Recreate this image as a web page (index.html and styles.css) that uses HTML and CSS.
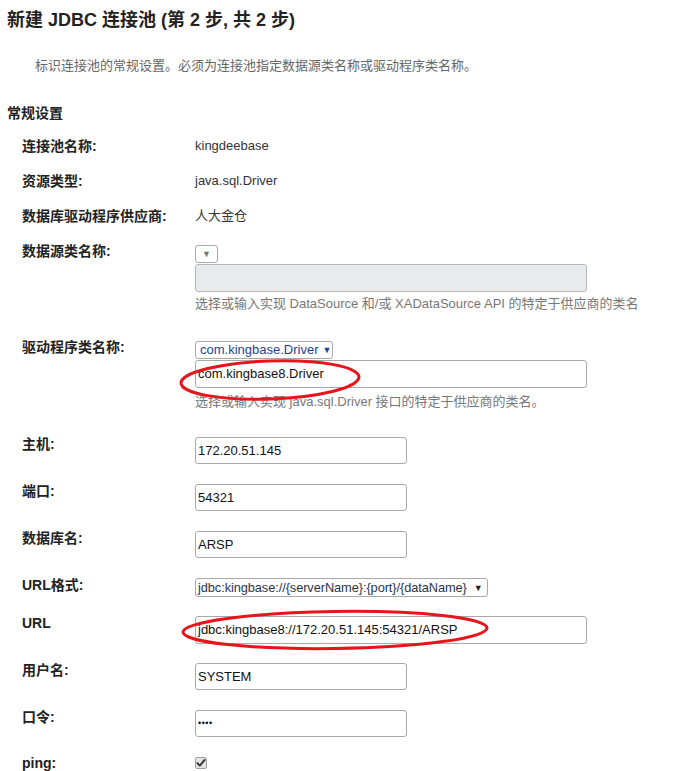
FILE: index.html
```html
<!DOCTYPE html>
<html lang="zh-CN">
<head>
<meta charset="utf-8">
<title>新建 JDBC 连接池</title>
<link rel="stylesheet" href="styles.css">
</head>
<body>
<div class="page">
  <h1 class="title">新建 JDBC 连接池 (第 2 步, 共 2 步)</h1>
  <p class="desc">标识连接池的常规设置。必须为连接池指定数据源类名称或驱动程序类名称。</p>
  <h2 class="section">常规设置</h2>

  <div class="form">
    <div class="row text-row">
      <div class="label">连接池名称:</div>
      <div class="value">kingdeebase</div>
    </div>
    <div class="row text-row">
      <div class="label">资源类型:</div>
      <div class="value">java.sql.Driver</div>
    </div>
    <div class="row text-row r3">
      <div class="label">数据库驱动程序供应商:</div>
      <div class="value">人大金仓</div>
    </div>
    <div class="row r4">
      <div class="label">数据源类名称:</div>
      <div class="field">
        <div class="select sel-empty"><span class="arrow grey">▼</span></div>
        <div class="input wide disabled"></div>
        <div class="help">选择或输入实现 DataSource 和/或 XADataSource API 的特定于供应商的类名</div>
      </div>
    </div>
    <div class="row r5">
      <div class="label">驱动程序类名称:</div>
      <div class="field">
        <div class="select sel-driver"><span class="sel-text blue">com.kingbase.Driver</span><span class="arrow blue">▼</span></div>
        <div class="input wide">com.kingbase8.Driver</div>
        <div class="help help2">选择或输入实现 java.sql.Driver 接口的特定于供应商的类名。</div>
      </div>
    </div>
    <div class="row r6">
      <div class="label">主机:</div>
      <div class="field"><div class="input">172.20.51.145</div></div>
    </div>
    <div class="row">
      <div class="label">端口:</div>
      <div class="field"><div class="input">54321</div></div>
    </div>
    <div class="row">
      <div class="label">数据库名:</div>
      <div class="field"><div class="input">ARSP</div></div>
    </div>
    <div class="row r9">
      <div class="label">URL格式:</div>
      <div class="field">
        <div class="select sel-url"><span class="sel-text slate">jdbc:kingbase://{serverName}:{port}/{dataName}</span><span class="arrow dark">▼</span></div>
      </div>
    </div>
    <div class="row r10">
      <div class="label">URL</div>
      <div class="field"><div class="input wide">jdbc:kingbase8://172.20.51.145:54321/ARSP</div></div>
    </div>
    <div class="row r11">
      <div class="label">用户名:</div>
      <div class="field"><div class="input">SYSTEM</div></div>
    </div>
    <div class="row r12">
      <div class="label">口令:</div>
      <div class="field"><div class="input pwd">••••</div></div>
    </div>
    <div class="row">
      <div class="label">ping:</div>
      <div class="field">
        <span class="checkbox"><svg width="10" height="10" viewBox="0 0 10 10"><path d="M1.5 5.2 L3.8 7.6 L8.6 2" fill="none" stroke="#3a3a3a" stroke-width="2" stroke-linecap="round" stroke-linejoin="round"/></svg></span>
      </div>
    </div>
  </div>
</div>

<svg class="marks" width="699" height="771" viewBox="0 0 699 771">
  <ellipse cx="270" cy="380" rx="89" ry="19" transform="rotate(-2 270 380)" fill="none" stroke="#e8141b" stroke-width="3"/>
  <ellipse cx="335" cy="630" rx="152" ry="18.5" transform="rotate(-0.8 335 630)" fill="none" stroke="#e8141b" stroke-width="3"/>
</svg>
</body>
</html>
```
FILE: styles.css
```css
html, body {
  margin: 0;
  padding: 0;
  background: #fff;
}
body {
  font-family: "Liberation Sans", Arial, "Noto Sans CJK SC", sans-serif;
  color: #222;
  position: relative;
  width: 699px;
  min-height: 771px;
}
.page {
  padding-left: 7px;
  padding-top: 8px;
}
.title {
  margin: 0;
  font-size: 18px;
  line-height: 24px;
  font-weight: bold;
  color: #222;
}
.desc {
  margin: 25px 0 0 28px;
  font-size: 13px;
  line-height: 18px;
  color: #666;
}
.section {
  margin: 28px 0 0;
  font-size: 14px;
  line-height: 20px;
  font-weight: bold;
  color: #222;
}
.form {
  margin-top: 15px;
  padding-left: 15px;
}
.row {
  display: grid;
  grid-template-columns: 173px 1fr;
  margin-bottom: 20px;
  align-items: start;
}
.text-row {
  margin-bottom: 19px;
}
.r3 { margin-bottom: 20px; }
.r4 { margin-bottom: 27px; }
.r5 { margin-bottom: 26px; }
.r9 { margin-bottom: 19px; }
.r10 { margin-bottom: 19px; }
.r12 { margin-bottom: 19px; }
.label {
  font-size: 14px;
  font-weight: bold;
  line-height: 15px;
  color: #222;
  white-space: nowrap;
}
.value {
  font-size: 13px;
  line-height: 15px;
  color: #333;
}
.text-row .label, .text-row .value { line-height: 16px; }
.field {
  display: flex;
  flex-direction: column;
  align-items: flex-start;
}
.select {
  box-sizing: border-box;
  height: 18px;
  border: 1px solid #a9a9a9;
  border-radius: 3px;
  background: #fff;
  display: flex;
  align-items: center;
  font-size: 13px;
  line-height: 16px;
  white-space: nowrap;
  overflow: hidden;
}
.r4 .select, .r5 .select { margin-top: 1px; }
.sel-empty {
  width: 23px;
  justify-content: center;
}
.sel-driver {
  width: 138px;
  padding: 0 4px 0 4px;
  gap: 4px;
}
.sel-url {
  width: 293px;
  height: 19px;
  padding: 0 4px 0 2px;
  gap: 7px;
}
.sel-url .sel-text {
  font-size: 12.8px;
  letter-spacing: -0.08px;
}
.sel-text { display: block; }
.arrow {
  font-size: 9px;
  line-height: 10px;
}
.grey { color: #777; }
.blue { color: #1f3f95; }
.slate { color: #2b3550; }
.dark { color: #222; }
.input {
  box-sizing: border-box;
  width: 212px;
  height: 27px;
  border: 1px solid #a9a9a9;
  border-radius: 3px;
  background: #fff;
  font-size: 13px;
  line-height: 25px;
  padding: 0 2px;
  color: #111;
  white-space: nowrap;
}
.input.wide {
  width: 392px;
  height: 28px;
  line-height: 26px;
}
.r4 .input, .r5 .input { margin-top: 1px; }
.disabled {
  background: #e8eaed;
  border-color: #b8b8b8;
}
.pwd {
  font-size: 9px;
  letter-spacing: 0.5px;
  color: #000;
}
.help {
  margin-top: 3px;
  font-size: 13px;
  line-height: 18px;
  color: #777;
  white-space: nowrap;
}
.help2 { margin-top: 5px; }
.checkbox {
  box-sizing: border-box;
  margin-top: 1px;
  width: 12px;
  height: 12px;
  border: 1px solid #a0a0a0;
  border-radius: 2px;
  background: #e4e4e4;
  display: flex;
  align-items: center;
  justify-content: center;
}
.marks {
  position: absolute;
  left: 0;
  top: 0;
  pointer-events: none;
}
```
